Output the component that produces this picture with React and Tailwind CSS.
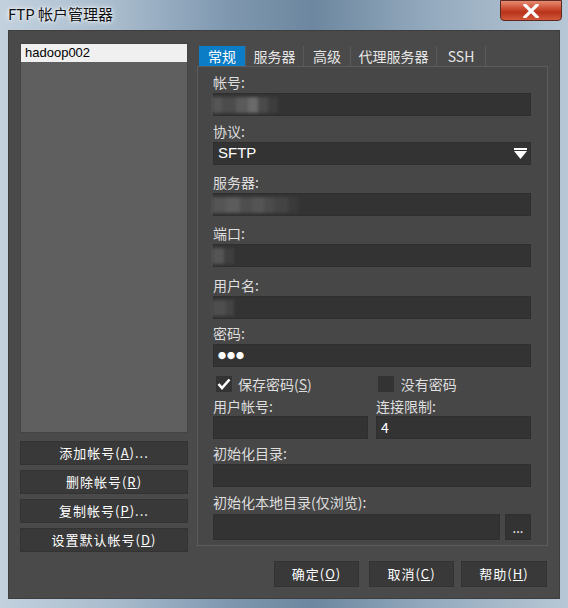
import React from 'react';

const font = { fontFamily: '"Noto Sans CJK SC", "Noto Sans", sans-serif' };

const Field = ({ children, className = '' }) => (
  <div
    className={`h-[23px] bg-[#333333] border border-[#2f2f2f] flex items-center px-[4px] text-[14px] text-white ${className}`}
  >
    {children}
  </div>
);

const Label = ({ children, className = '' }) => (
  <div className={`h-[20px] leading-[20px] text-[14px] text-[#dedede] ${className}`}>
    {children}
  </div>
);

// pixelated blur used over hidden values
const Mosaic = ({ blocks }) => (
  <div className="flex items-center -ml-[6px] blur-[1.5px]">
    {blocks.map((b, i) => (
      <div key={i} className={`h-[16px] ${b}`} />
    ))}
  </div>
);

const SideButton = ({ children }) => (
  <div className="h-[24px] bg-[#393939] border border-[#333] text-[13px] text-white flex items-center justify-center tracking-[1px]">
    {children}
  </div>
);

const BottomButton = ({ children, className = '' }) => (
  <div
    className={`h-[26px] bg-[#393939] border border-[#333] text-[13px] text-white flex items-center justify-center tracking-[1px] ${className}`}
  >
    {children}
  </div>
);

const Tab = ({ children, active, className = '' }) => (
  <div
    className={`h-[20px] flex items-center justify-center text-[14px] border-r border-[#5a5a5a] ${
      active ? 'bg-[#0b7cc6] text-white' : 'text-[#e6e6e6]'
    } ${className}`}
  >
    {children}
  </div>
);

const App = () => {
  return (
    <div
      style={font}
      className="w-[568px] h-[608px] flex flex-col bg-[linear-gradient(90deg,#c3d1de_0%,#a9bccd_20%,#7f98b0_40%,#6c879f_55%,#93a9bd_75%,#b7c7d5_100%)] overflow-hidden"
    >
      {/* title bar */}
      <div className="h-[30px] flex items-start">
        <div className="pl-[8px] pt-[3px] text-[15px] text-[#111] [text-shadow:0_0_6px_#ffffff,0_0_3px_#ffffff]">
          FTP 帐户管理器
        </div>
        <div className="ml-auto mr-[6px] w-[62px] h-[21px] rounded-b-[4px] border border-[#5b2a22] bg-[linear-gradient(180deg,#e58a70_0%,#c8462c_45%,#b8341c_60%,#d4583a_100%)] flex items-center justify-center">
          <svg width="16" height="14" viewBox="0 0 16 14">
            <path
              d="M2 1 L14 13 M14 1 L2 13"
              stroke="#ffffff"
              strokeWidth="3.2"
              strokeLinecap="square"
            />
          </svg>
        </div>
      </div>

      {/* client area */}
      <div className="mx-[8px] mb-[9px] flex-1 bg-[#4a4a4a] border border-[#3e3e3e] flex pt-[12px] pl-[11px] pr-[11px]">
        {/* left column */}
        <div className="w-[170px] flex flex-col">
          <div className="h-[390px] bg-[#5f5f5f] border border-[#444]">
            <div className="h-[18px] bg-[#f0f0f0] text-black text-[13px] leading-[18px] pl-[4px] font-['Liberation_Sans','Noto_Sans',sans-serif]">
              hadoop002
            </div>
          </div>
          <div className="mt-[8px] flex flex-col gap-[5px]">
            <SideButton>
              添加帐号(<u>A</u>)...
            </SideButton>
            <SideButton>
              删除帐号(<u>R</u>)
            </SideButton>
            <SideButton>
              复制帐号(<u>P</u>)...
            </SideButton>
            <SideButton>
              设置默认帐号(<u>D</u>)
            </SideButton>
          </div>
        </div>

        {/* right column */}
        <div className="ml-[9px] w-[351px] flex flex-col pt-[3px]">
          <div className="flex pl-[2px]">
            <Tab active className="w-[47px]">常规</Tab>
            <Tab className="w-[58px]">服务器</Tab>
            <Tab className="w-[47px]">高级</Tab>
            <Tab className="w-[86px]">代理服务器</Tab>
            <Tab className="w-[49px] text-[12px]">SSH</Tab>
          </div>

          <div className="h-[480px] border border-[#5c5c5c] bg-[#474747] pl-[15px] pr-[16px] pt-[5px] flex flex-col">
            <Label>帐号:</Label>
            <Field className="mt-[1px]">
              <Mosaic blocks={['w-[10px] bg-[#555]', 'w-[14px] bg-[#4c4c4c]', 'w-[12px] bg-[#5a5a5a]', 'w-[10px] bg-[#6a6a6a]', 'w-[10px] bg-[#4a4a4a]', 'w-[10px] bg-[#3d3d3d]']} />
            </Field>

            <Label className="mt-[5px]">协议:</Label>
            <Field className="mt-[1px] justify-between">
              <span className="font-['Liberation_Sans',sans-serif] text-[15px]">SFTP</span>
              <svg width="13" height="12" viewBox="0 0 13 12" className="mr-[-1px]">
                <rect x="0" y="0" width="13" height="2" fill="#fff" />
                <path d="M0 3 L13 3 L6.5 11 Z" fill="#fff" />
              </svg>
            </Field>

            <Label className="mt-[7px]">服务器:</Label>
            <Field className="mt-[1px]">
              <Mosaic blocks={['w-[14px] bg-[#555]', 'w-[14px] bg-[#5c5c5c]', 'w-[12px] bg-[#4e4e4e]', 'w-[12px] bg-[#555]', 'w-[10px] bg-[#4b4b4b]', 'w-[14px] bg-[#444]', 'w-[10px] bg-[#3a3a3a]']} />
            </Field>

            <Label className="mt-[7px]">端口:</Label>
            <Field className="mt-[1px]">
              <Mosaic blocks={['w-[12px] bg-[#555]', 'w-[10px] bg-[#3f3f3f]']} />
            </Field>

            <Label className="mt-[8px]">用户名:</Label>
            <Field className="mt-[1px]">
              <Mosaic blocks={['w-[14px] bg-[#4e4e4e]', 'w-[8px] bg-[#444]']} />
            </Field>

            <Label className="mt-[4px]">密码:</Label>
            <Field className="mt-[1px] h-[22px]">
              <span className="text-[8px] tracking-[1px] leading-none">●●●</span>
            </Field>

            <div className="mt-[9px] h-[16px] flex items-center text-[14px] text-[#dedede]">
              <div className="w-[16px] h-[16px] bg-[#333] ml-[3px] flex items-center justify-center">
                <svg width="14" height="12" viewBox="0 0 14 12">
                  <path d="M1.5 6 L5 10 L12.5 1.5" stroke="#fff" strokeWidth="2.6" fill="none" />
                </svg>
              </div>
              <span className="ml-[6px]">
                保存密码(<u>S</u>)
              </span>
              <div className="w-[16px] h-[16px] bg-[#333] ml-[66px]" />
              <span className="ml-[7px]">没有密码</span>
            </div>

            <div className="mt-[4px] flex gap-[8px]">
              <div className="w-[156px]">
                <Label>用户帐号:</Label>
                <Field className="h-[21px]" />
              </div>
              <div className="w-[156px]">
                <Label>连接限制:</Label>
                <Field className="h-[21px] text-[13px]">4</Field>
              </div>
            </div>

            <Label className="mt-[4px]">初始化目录:</Label>
            <Field className="mt-[1px] h-[22px]" />

            <Label className="mt-[5px]">初始化本地目录(仅浏览):</Label>
            <div className="mt-[2px] flex gap-[5px]">
              <Field className="h-[26px] flex-1" />
              <div className="w-[26px] h-[26px] bg-[#333] border border-[#2f2f2f] text-white text-[13px] flex items-end justify-center pb-[5px] leading-none">
                ...
              </div>
            </div>
          </div>

          <div className="mt-[15px] flex justify-end pr-[1px]">
            <BottomButton className="w-[85px]">
              确定(<u>O</u>)
            </BottomButton>
            <BottomButton className="w-[85px] ml-[10px]">
              取消(<u>C</u>)
            </BottomButton>
            <BottomButton className="w-[86px] ml-[7px]">
              帮助(<u>H</u>)
            </BottomButton>
          </div>
        </div>
      </div>
    </div>
  );
};

export default App;
